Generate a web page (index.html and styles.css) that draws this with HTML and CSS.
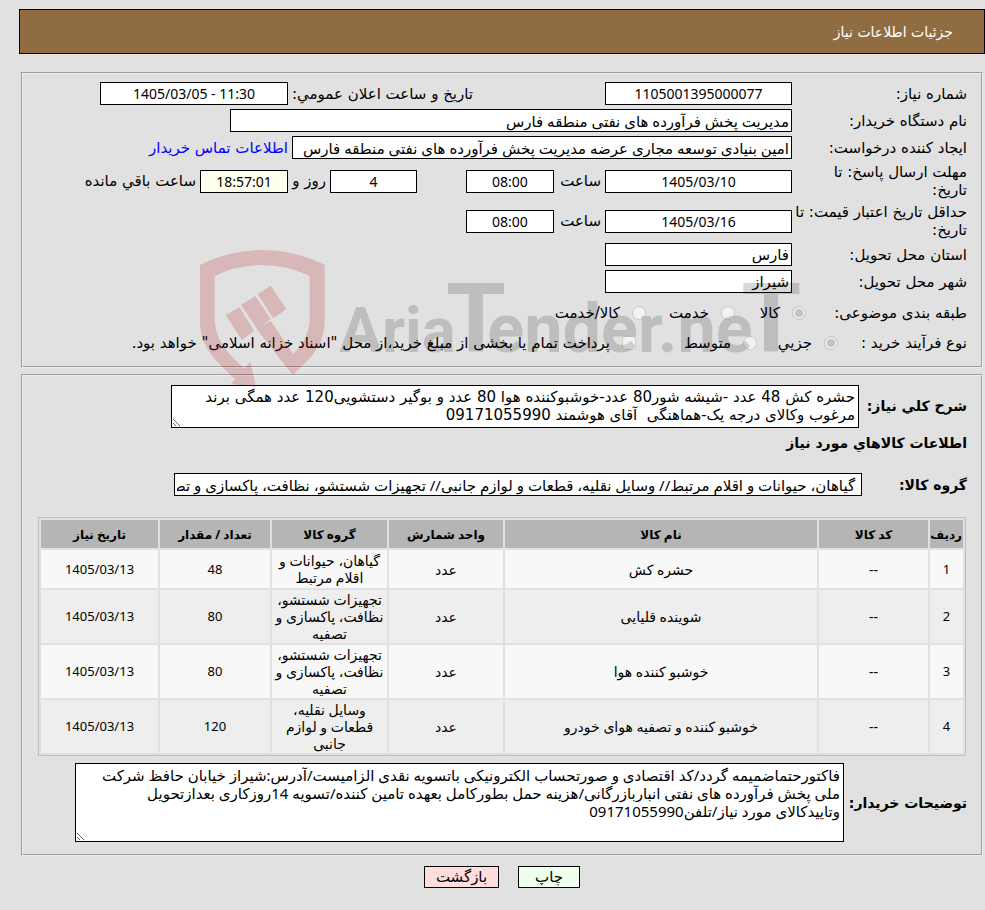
FILE: index.html
```html
<!DOCTYPE html>
<html lang="fa" dir="rtl">
<head>
<meta charset="utf-8">
<title>جزئیات اطلاعات نیاز</title>
<link rel="stylesheet" href="styles.css">
</head>
<body>
<header class="page-header"><h1>جزئیات اطلاعات نیاز</h1></header>
<main>
<form>
<fieldset class="panel">
  <div class="fields">
    <label class="name" for="need-no">شماره نیاز:</label>
    <input class="box num" id="need-no" value="1105001395000077" readonly>
    <label class="announce" for="announce">تاریخ و ساعت اعلان عمومي:</label>
    <input class="box num date-time" id="announce" value="1405/03/05 - 11:30" dir="ltr" readonly>

    <label class="name" for="org">نام دستگاه خریدار:</label>
    <input class="box org" id="org" value="مدیریت پخش فرآورده های نفتی منطقه فارس" readonly>

    <label class="name" for="creator">ایجاد کننده درخواست:</label>
    <input class="box creator" id="creator" value="امین بنیادی توسعه مجاری عرضه مدیریت پخش فرآورده های نفتی منطقه فارس" readonly>
    <a class="contact" href="#contact">اطلاعات تماس خریدار</a>

    <label class="name" for="deadline">مهلت ارسال پاسخ: تا<br>تاریخ:</label>
    <input class="box num" id="deadline" value="1405/03/10" readonly>
    <label class="unit" for="deadline-time">ساعت</label>
    <input class="box num" id="deadline-time" value="08:00" readonly>
    <input class="box num days" id="days" value="4" readonly>
    <label class="unit" for="days">روز و</label>
    <input class="box num timer" id="timer" value="18:57:01" readonly>
    <label class="unit" for="timer">ساعت باقي مانده</label>

    <label class="name" for="valid">حداقل تاریخ اعتبار قیمت: تا<br>تاریخ:</label>
    <input class="box num" id="valid" value="1405/03/16" readonly>
    <label class="unit" for="valid-time">ساعت</label>
    <input class="box num" id="valid-time" value="08:00" readonly>

    <label class="name" for="province">استان محل تحویل:</label>
    <input class="box" id="province" value="فارس" readonly>

    <label class="name" for="city">شهر محل تحویل:</label>
    <input class="box" id="city" value="شیراز" readonly>
  </div>
  <div class="options subject">
    <span>طبقه بندی موضوعی:</span>
    <label><input type="radio" name="subject" checked disabled>کالا</label>
    <label><input type="radio" name="subject" disabled>خدمت</label>
    <label><input type="radio" name="subject" disabled>کالا/خدمت</label>
  </div>
  <div class="options process">
    <span>نوع فرآیند خرید :</span>
    <label><input type="radio" name="process" checked disabled>جزیي</label>
    <label><input type="radio" name="process" disabled>متوسط</label>
    <label><input type="checkbox" disabled>پرداخت تمام یا بخشی از مبلغ خرید،از محل "اسناد خزانه اسلامی" خواهد بود.</label>
  </div>
  <svg class="watermark" viewBox="60 45 1800 420" direction="ltr" aria-hidden="true">
    <g class="shield">
      <path d="M60 90Q150 45 247 45Q345 45 434 90V255C434 325 400 365 338 420L230 282L272 258L340 357C372 325 389 292 389 250V123Q320 90 247 90Q170 90 104 123V250C104 312 142 356 193 400L211 380L228 456L152 447L166 433C105 378 60 332 60 260Z"/>
      <path d="M137 240L178 217L223 288L185 314ZM183 210L226 183L272 252L232 283ZM233 178L272 152L319 222L280 250Z"/>
    </g>
    <g class="brand">
      <text x="478" y="350" font-size="190">Aria</text>
      <text x="798" y="350" font-size="290">T</text>
      <text x="922" y="350" font-size="205">ender.ne</text>
      <text x="1684" y="350" font-size="290">T</text>
    </g>
  </svg>
</fieldset>

<fieldset class="panel">
  <div class="line">
    <label class="strong summary-name" for="summary">شرح کلي نیاز:</label>
    <textarea class="box summary" id="summary" readonly>حشره کش 48 عدد -شیشه شور80 عدد-خوشبوکننده هوا 80 عدد و بوگیر دستشویی120 عدد همگی برند
مرغوب وکالای درجه یک-هماهنگی  آقای هوشمند 09171055990</textarea>
  </div>
  <h2>اطلاعات کالاهاي مورد نیاز</h2>
  <div class="line">
    <label class="strong group-name" for="group">گروه کالا:</label>
    <input class="box group" id="group" value=" گیاهان، حیوانات و اقلام مرتبط// وسایل نقلیه، قطعات و لوازم جانبی// تجهیزات شستشو، نظافت، پاکسازی و تصفیه" readonly>
  </div>
  <table>
    <colgroup><col class="c-row"><col class="c-code"><col><col class="c-unit"><col class="c-group"><col class="c-qty"><col class="c-date"></colgroup>
    <thead>
      <tr><th>ردیف</th><th>کد کالا</th><th>نام کالا</th><th>واحد شمارش</th><th>گروه کالا</th><th>تعداد / مقدار</th><th>تاریخ نیاز</th></tr>
    </thead>
    <tbody>
      <tr><td class="n">1</td><td>--</td><td>حشره کش</td><td>عدد</td><td>گیاهان، حیوانات و اقلام مرتبط</td><td class="n">48</td><td class="n">1405/03/13</td></tr>
      <tr><td class="n">2</td><td>--</td><td>شوینده قلیایی</td><td>عدد</td><td>تجهیزات شستشو، نظافت، پاکسازی و تصفیه</td><td class="n">80</td><td class="n">1405/03/13</td></tr>
      <tr><td class="n">3</td><td>--</td><td>خوشبو کننده هوا</td><td>عدد</td><td>تجهیزات شستشو، نظافت، پاکسازی و تصفیه</td><td class="n">80</td><td class="n">1405/03/13</td></tr>
      <tr><td class="n">4</td><td>--</td><td>خوشبو کننده و تصفیه هوای خودرو</td><td>عدد</td><td>وسایل نقلیه، قطعات و لوازم جانبی</td><td class="n">120</td><td class="n">1405/03/13</td></tr>
    </tbody>
  </table>
  <div class="line">
    <label class="strong notes-name" for="notes">توضیحات خریدار:</label>
    <textarea class="box notes" id="notes" readonly>فاکتورحتماضمیمه گردد/کد اقتصادی و صورتحساب الکترونیکی باتسویه نقدی الزامیست/آدرس:شیراز خیابان حافظ شرکت
ملی پخش فرآورده های نفتی انباربازرگانی/هزینه حمل بطورکامل بعهده تامین کننده/تسویه 14روزکاری بعدازتحویل
وتاییدکالای مورد نیاز/تلفن09171055990</textarea>
  </div>
</fieldset>
<div class="actions">
  <button class="print" type="button">چاپ</button>
  <button class="back" type="button">بازگشت</button>
</div>
</form>
</main>
</body>
</html>
```
FILE: styles.css
```css
* { box-sizing: border-box; }

body {
  margin: 0;
  padding: 9px 0 0 19px;
  background: #e1e1e1;
  color: #000;
  font: 15px/18px "DejaVu Sans", sans-serif;
}

input, textarea, button { font: inherit; color: inherit; }

.page-header {
  display: flex;
  align-items: center;
  height: 45px;
  padding: 0 31px;
  border: 1px solid #000;
  background: #8f6d40;
  color: #fff;
}

h1 { margin: 0; font-size: 14px; font-weight: normal; }

main { padding: 18px 2px 0; }

.panel {
  position: relative;
  min-width: 0;
  margin: 0 0 6px;
  padding: 8px 14px;
  border: 2px groove #f0f0f0;
}

.fields {
  display: grid;
  grid-template-columns: 175px 187px 51px 88px 49px 87px 42px 88px 1fr;
  row-gap: 4px;
  align-items: center;
}

.name { grid-column: 1; white-space: nowrap; }

.box {
  width: 100%;
  height: 23px;
  margin: 0;
  padding: 0 2px;
  border: 1px solid #000;
  border-radius: 0;
  background: #fff;
}

.num, .org, .creator, .group, .notes, table { font-family: "Noto Sans", "DejaVu Sans", sans-serif; }

.num { font-size: 14px; text-align: center; }
.announce { grid-column: 3 / 8; padding-left: 4px; text-align: left; }
.date-time { grid-column: 8 / 10; width: 188px; }
.org { grid-column: 2 / 10; width: 562px; }
.creator { grid-column: 2 / 8; width: 500px; }
.contact { color: #00f; text-decoration: none; white-space: nowrap; }
.unit { padding: 0 4px; white-space: nowrap; }
.days { grid-column: 6; }
.timer { background: #ffffee; }

.options { display: grid; align-items: center; height: 30px; white-space: nowrap; }
.subject { grid-template-columns: 161px 71px 89px 1fr; margin-top: 5px; }
.process { grid-template-columns: 129px 81px 121px 1fr; }
.options label { display: flex; align-items: center; gap: 12px; }

.options input {
  appearance: none;
  flex: none;
  width: 14px;
  height: 14px;
  margin: 0;
  border: 1px solid #cbcbcb;
  background: #f2f2f2;
}

.options input[type="radio"] { border-radius: 50%; }
.options input[type="checkbox"] { border-radius: 3px; }
.options input:checked { background: #c4c4c4; box-shadow: inset 0 0 0 2px #eee; }

.watermark {
  position: absolute;
  z-index: 1;
  top: 176px;
  left: 177px;
  width: 600px;
  height: 140px;
  pointer-events: none;
}

.shield { fill: #b41414; opacity: 0.2; }

.brand {
  font-family: Roboto, sans-serif;
  font-weight: bold;
  fill: #000;
  opacity: 0.15;
}

.line { display: flex; align-items: center; justify-content: flex-start; gap: 5px; }
.strong { flex: none; font-size: 14px; font-weight: bold; white-space: nowrap; }

textarea.box { flex: none; padding: 2px 3px; overflow: hidden; white-space: pre; }
textarea.summary { width: 688px; height: 43px; margin-top: 1px; }
textarea.notes { width: 769px; height: 79px; }

h2 { margin: 6px 0 21px; font-size: 14px; line-height: 18px; font-weight: bold; }

.summary-name { width: 103px; }
.group-name { width: 100px; }
.notes-name { width: 118px; }
.group { width: 688px; }

table {
  width: calc(100% - 2px);
  margin: 21px 1px 7px;
  border: 1px solid #bdbdbd;
  border-spacing: 2px;
  table-layout: fixed;
  font-size: 14px;
  line-height: 17px;
  text-align: center;
}

th, td { padding: 1px; }
th { height: 28px; background: #b5b5b5; font-size: 12px; white-space: nowrap; }
td { height: 38px; background: #eee; }
tbody tr:nth-child(odd) td { background: #f8f8f8; }
.n { font-size: 13px; }

.c-row { width: 33px; }
.c-code { width: 109px; }
.c-unit { width: 114px; }
.c-group { width: 115px; }
.c-qty { width: 110px; }
.c-date { width: 117px; }

.panel + .panel { padding-bottom: 12px; }

.actions { display: flex; justify-content: center; gap: 19px; margin-top: 10px; }

button {
  height: 22px;
  padding: 0;
  border: 1px solid #000;
}

.print { width: 62px; background: #eeffee; }
.back { width: 75px; background: #ffdddd; }
```
